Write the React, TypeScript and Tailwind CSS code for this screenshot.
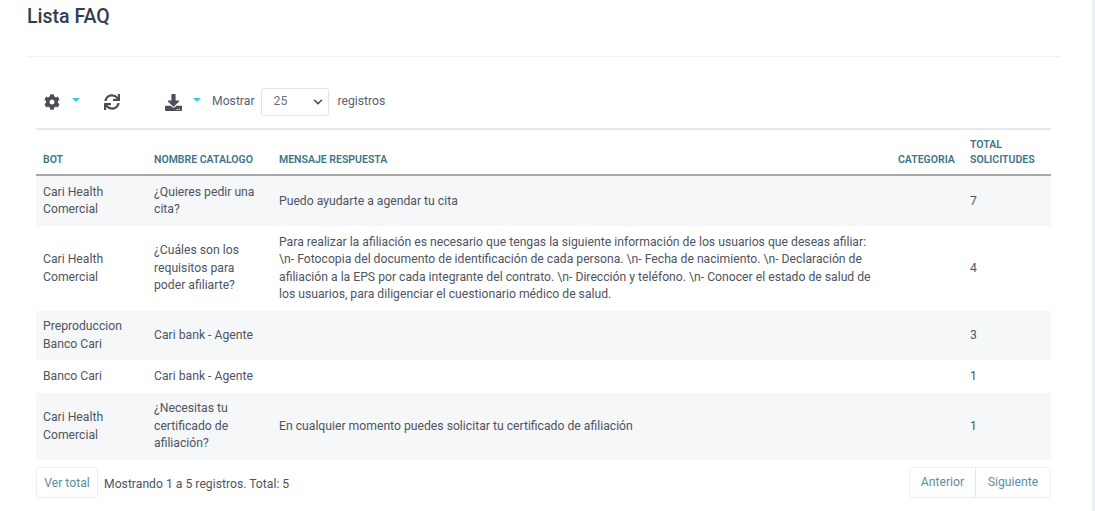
import { FaCog, FaSync, FaDownload } from "react-icons/fa";
import { ChevronDown } from "lucide-react";

const rows = [
  { bot: "Cari Health Comercial", name: "¿Quieres pedir una cita?", msg: "Puedo ayudarte a agendar tu cita", total: "7", s: true },
  {
    bot: "Cari Health Comercial",
    name: "¿Cuáles son los requisitos para poder afiliarte?",
    msg: "Para realizar la afiliación es necesario que tengas la siguiente información de los usuarios que deseas afiliar: \\n- Fotocopia del documento de identificación de cada persona. \\n- Fecha de nacimiento. \\n- Declaración de afiliación a la EPS por cada integrante del contrato. \\n- Dirección y teléfono. \\n- Conocer el estado de salud de los usuarios, para diligenciar el cuestionario médico de salud.",
    total: "4",
    s: false,
  },
  { bot: "Preproduccion Banco Cari", name: "Cari bank - Agente", msg: "", total: "3", s: true },
  { bot: "Banco Cari", name: "Cari bank - Agente", msg: "", total: "1", s: false },
  { bot: "Cari Health Comercial", name: "¿Necesitas tu certificado de afiliación?", msg: "En cualquier momento puedes solicitar tu certificado de afiliación", total: "1", s: true },
];

function Caret() {
  return <span className="w-0 h-0 border-x-[4px] border-x-transparent border-t-[4px] border-t-[#2fcfd6]" />;
}

export default function App() {
  return (
    <div className="flex h-[511px] w-[1095px] overflow-hidden bg-white font-['Roboto','Liberation_Sans',sans-serif] text-[12.2px] leading-[17.5px] text-[#4e5561]">
      <div className="flex-1 min-w-0 pl-[27px] pr-[32px]">
        <h1 className="h-[57px] border-b border-[#f1f2f5] pt-[5px] text-[19.5px] leading-[24px] font-medium text-[#343d50]">Lista FAQ</h1>
        <div className="pl-[9px] pr-[9px]">
          <div className="flex h-[71px] items-center pt-[19px] text-[#5a6270]">
            <FaCog className="ml-[8px] text-[16px] text-[#4b4f57]" />
            <span className="ml-[12px] mb-[4px] flex"><Caret /></span>
            <FaSync className="ml-[24px] text-[16px] text-[#4b4f57]" />
            <FaDownload className="ml-[45px] text-[17px] text-[#4b4f57]" />
            <span className="ml-[11px] mb-[4px] flex"><Caret /></span>
            <span className="ml-[11px]">Mostrar</span>
            <div className="ml-[6px] flex h-[28px] w-[68px] items-center justify-between rounded-[3px] border border-[#dfe3ee] pl-[12px] pr-[2px] text-[#6c7280]">
              <span>25</span>
              <ChevronDown size={14} strokeWidth={2.5} className="mr-[1px] text-[#40454f]" />
            </div>
            <span className="ml-[9px]">registros</span>
          </div>
          <table className="w-[1015px] table-fixed border-collapse">
            <colgroup>
              <col className="w-[111px]" />
              <col className="w-[125px]" />
              <col className="w-[619px]" />
              <col className="w-[72px]" />
              <col className="w-[88px]" />
            </colgroup>
            <thead>
              <tr className="border-t-2 border-t-[#e6e9ef] border-b-2 border-b-[#a8a8a8] text-left align-bottom text-[10.5px] leading-[15px] font-semibold text-[#3c7488]">
                <th className="pl-[7px] pr-[4px] pb-[7px] font-semibold">BOT</th>
                <th className="pl-[7px] pr-[4px] pb-[7px] font-semibold whitespace-nowrap">NOMBRE CATALOGO</th>
                <th className="pl-[7px] pr-[4px] pb-[7px] font-semibold">MENSAJE RESPUESTA</th>
                <th className="pl-[7px] pr-[2px] pb-[7px] font-semibold">CATEGORIA</th>
                <th className="h-[46px] pl-[7px] pr-[0px] pb-[7px] font-semibold">TOTAL<br />SOLICITUDES</th>
              </tr>
            </thead>
            <tbody>
              {rows.map((r, i) => (
                <tr key={i} className={r.s ? "bg-[#f6f7f9]" : "bg-white"}>
                  <td className="pt-[7.75px] pb-[7px] pl-[7px] pr-[20px]">{r.bot}</td>
                  <td className="pt-[7.75px] pb-[7px] pl-[7px] pr-[10px]">{r.name}</td>
                  <td className="pt-[7.75px] pb-[7px] pl-[7px] pr-[9px]">{r.msg}</td>
                  <td className="pt-[7.75px] pb-[7px] pl-[7px]"></td>
                  <td className="pt-[7.75px] pb-[7px] pl-[7px]">{r.total}</td>
                </tr>
              ))}
            </tbody>
          </table>
          <div className="mt-[7px] flex items-center justify-between">
            <div className="flex items-center">
              <div className="flex h-[31px] w-[62px] items-center justify-center rounded-[3px] border border-[#eceef2] pt-[3px] text-[#5b8ea3]">Ver total</div>
              <span className="ml-[6px] pt-[4px]">Mostrando 1 a 5 registros. Total: 5</span>
            </div>
            <div className="flex h-[31px] rounded-[4px] border border-[#eceef2] text-[#5b8ea3]">
              <div className="flex w-[66px] items-center justify-center border-r border-[#e4e6ea]">Anterior</div>
              <div className="flex w-[74px] items-center justify-center">Siguiente</div>
            </div>
          </div>
        </div>
      </div>
      <div className="w-[3px] shrink-0 bg-[#eef0f8]" />
    </div>
  );
}
